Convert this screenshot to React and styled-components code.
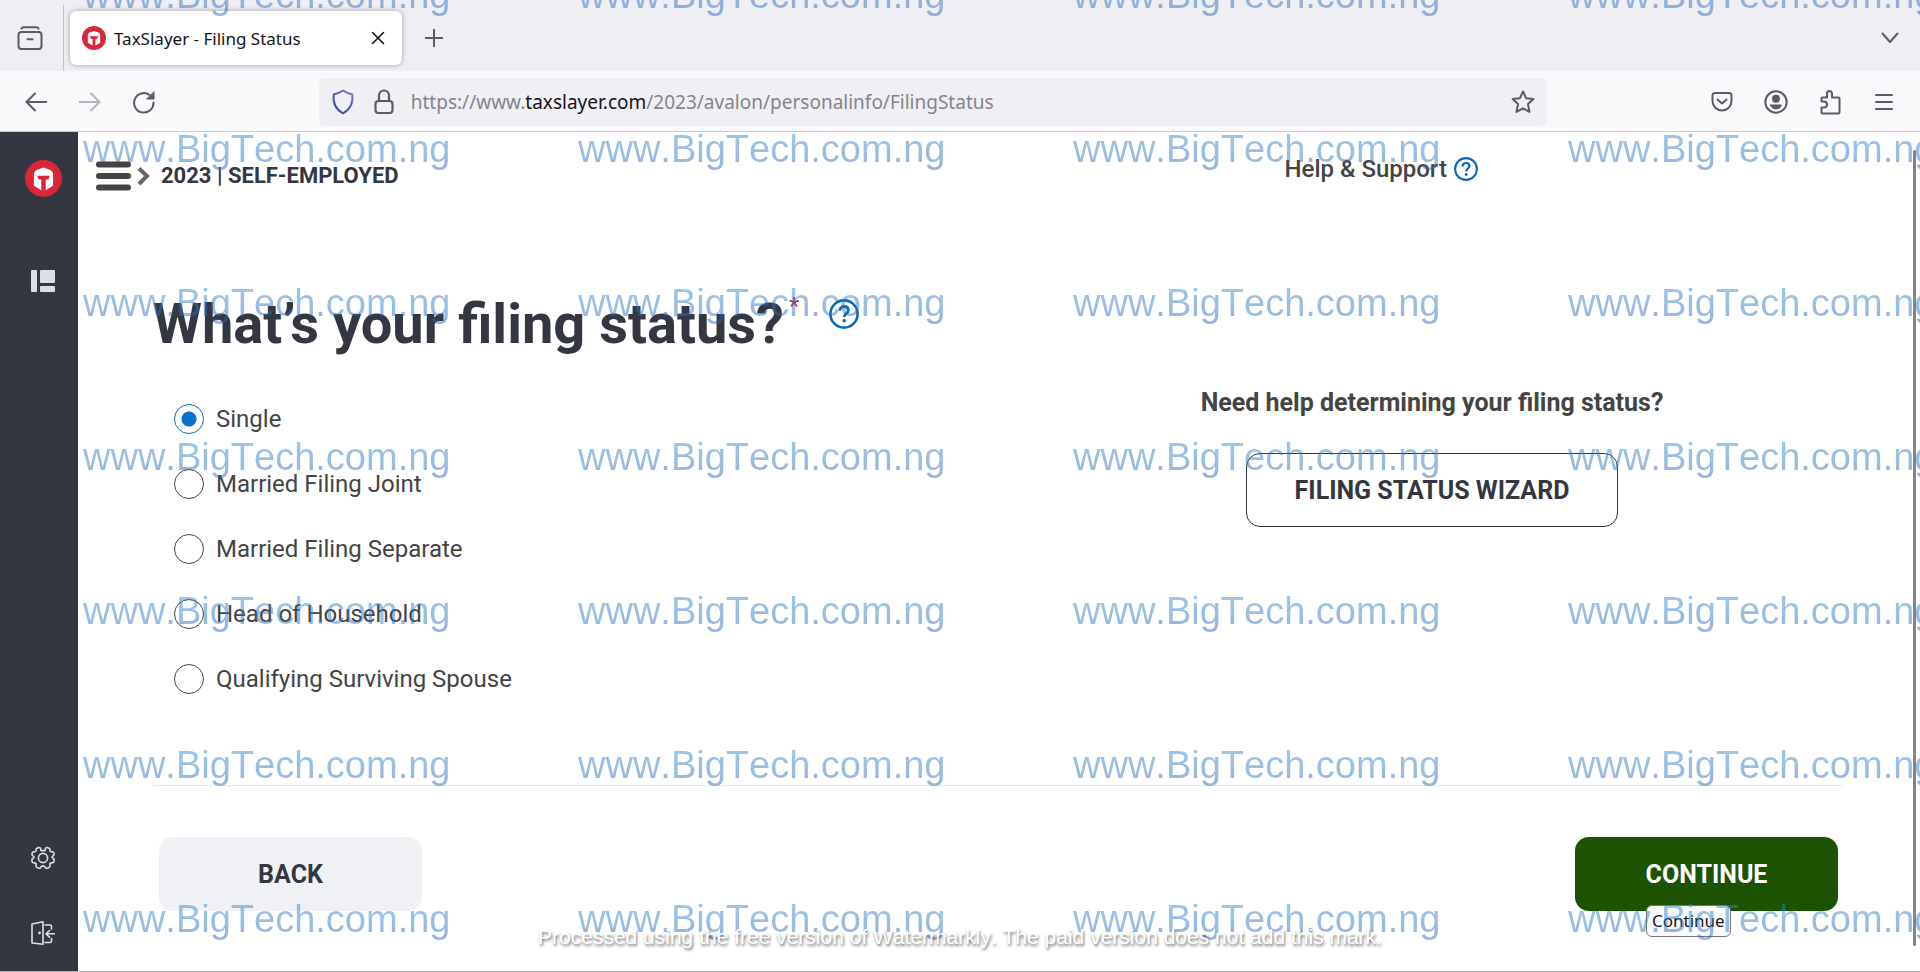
import { useState } from "react";
import styled, { createGlobalStyle } from "styled-components";

const STATUSES = [
    "Single",
    "Married Filing Joint",
    "Married Filing Separate",
    "Head of Household",
    "Qualifying Surviving Spouse",
];

const stamps = Array.from({ length: 28 }, (_, i) => i);

function Logo({ size }) {
    return (
        <svg width={size} height={size} viewBox="0 0 38 38" aria-hidden="true">
            <circle cx="19" cy="19" r="19" fill="#d92638" />
            <path d="M19 7.8l7 2.4q2.8 1.500 2.800 4V26.500L21.300 31V20h2.700l1.500-3.700h-13L14 20h2.700v11l-7.500-4.500V14.200q0-2.500 2.800-4z" fill="#fff" />
        </svg>
    );
}

function HelpIcon({ size }) {
    return (
        <svg width={size} height={size} viewBox="0 0 30 30" fill="none" stroke="#0b69b7" aria-hidden="true">
            <circle cx="15" cy="15" r="13.6" strokeWidth="2.6" />
            <path d="M10.8 11.800c0-2.600 1.900-4.300 4.300-4.300s4.200 1.500 4.200 3.900c0 3.100-4.100 3-4.100 6.600" strokeWidth="2.8" />
            <circle cx="15.2" cy="21.8" r="1.8" fill="#0b69b7" stroke="none" />
        </svg>
    );
}

function Browser() {
    return (
        <header>
            <TabStrip>
                <ViewButton aria-label="Recent browsing">
                    <Icon width="26" height="26" viewBox="0 0 26 26">
                        <path d="M4.5 2.500C5 1.500 5.500 1.200 6.500 1.200h13c1 0 1.500.3 2 1.300" />
                        <rect x="1.5" y="6" width="23" height="17" rx="3" />
                        <path d="M10.5 13.200h5" />
                    </Icon>
                </ViewButton>
                <Tab>
                    <Logo size={24} />
                    <TabTitle>TaxSlayer - Filing Status</TabTitle>
                    <CloseButton aria-label="Close tab">
                        <Icon width="14" height="14" viewBox="0 0 14 14" $color="#15141a" $line={1.6}>
                            <path d="M1.5 1.500l11 11M12.500 1.500l-11 11" />
                        </Icon>
                    </CloseButton>
                </Tab>
                <ToolButton aria-label="New tab">
                    <Icon width="18" height="18" viewBox="0 0 18 18">
                        <path d="M9 .5v17M.5 9h17" />
                    </Icon>
                </ToolButton>
                <Spring />
                <ToolButton aria-label="List all tabs">
                    <Icon width="20" height="12" viewBox="0 0 20 12">
                        <path d="M2.5 1.500l7.500 8.500 7.500-8.500" />
                    </Icon>
                </ToolButton>
            </TabStrip>
            <Toolbar>
                <ToolButton aria-label="Back">
                    <Icon width="22" height="20" viewBox="0 0 22 20">
                        <path d="M10 1.500L1.500 10l8.500 8.500M1.500 10h20" />
                    </Icon>
                </ToolButton>
                <ToolButton aria-label="Forward">
                    <Icon width="22" height="20" viewBox="0 0 22 20" $color="#b5b4ba">
                        <path d="M12 1.500l8.500 8.500-8.500 8.500M20.500 10h-20" />
                    </Icon>
                </ToolButton>
                <ToolButton aria-label="Reload">
                    <Icon width="24" height="24" viewBox="0 0 24 24">
                        <path d="M21.5 12.500A9.700 9.700 0 1 1 17.500 5" />
                        <path d="M22 2v7h-7z" fill="#5b5b66" strokeWidth="1" />
                    </Icon>
                </ToolButton>
                <Spring />
                <UrlBar>
                    <svg width="28" height="26" viewBox="0 0 24 26" fill="none" aria-hidden="true">
                        <defs>
                            <linearGradient id="shield" x1="1" y1="0" x2="0" y2="1">
                                <stop offset="0" stopColor="#a35cd6" />
                                <stop offset="0.6" stopColor="#4a54c4" />
                                <stop offset="1" stopColor="#2b4ba8" />
                            </linearGradient>
                        </defs>
                        <path d="M12 1.500c3 2 6 3.200 9.300 4 .8 7-1.300 14.500-9.300 18.800C4 20 1.900 12.500 2.700 5.500 6 4.700 9 3.500 12 1.500z" stroke="url(#shield)" strokeWidth="1.9" strokeLinejoin="round" />
                    </svg>
                    <Icon width="20" height="26" viewBox="0 0 20 26" $line={2.2}>
                        <rect x="1.5" y="12" width="17" height="12" rx="3" />
                        <path d="M5 12V6.500a5 5 0 0 1 10 0V12" />
                    </Icon>
                    <Url>https://www.<b>taxslayer.com</b>/2023/avalon/personalinfo/FilingStatus</Url>
                    <BookmarkButton aria-label="Bookmark this page">
                        <Icon width="24" height="24" viewBox="0 0 24 24">
                            <path d="M12 1.500l3.100 6.700 7.300.9-5.400 5 1.500 7.800L12 18.300 5.500 21.900 7 14.100l-5.400-5 7.300-.9z" />
                        </Icon>
                    </BookmarkButton>
                </UrlBar>
                <Spring />
                <ToolButton aria-label="Save to Pocket">
                    <Icon width="22" height="22" viewBox="0 0 22 22">
                        <path d="M4 2h14a2.500 2.500 0 0 1 2.500 2.500V10a9.500 9.500 0 0 1-19 0V4.500A2.500 2.500 0 0 1 4 2z" />
                        <path d="M6.5 8.500l4.500 4 4.500-4" />
                    </Icon>
                </ToolButton>
                <ToolButton aria-label="Account">
                    <Icon width="24" height="24" viewBox="0 0 24 24">
                        <circle cx="12" cy="12" r="10.7" />
                        <circle cx="12" cy="8.8" r="3" fill="#5b5b66" />
                        <path d="M6.5 15h11c-.8 2.800-3 4-5.500 4s-4.700-1.200-5.500-4z" fill="#5b5b66" strokeWidth="1" />
                    </Icon>
                </ToolButton>
                <ToolButton aria-label="Extensions">
                    <Icon width="22" height="26" viewBox="0 0 22 26">
                        <path d="M3.5 8.500H8V4.500a2.500 2.500 0 0 1 5 0v4h6.500a1 1 0 0 1 1 1V23a1.500 1.500 0 0 1-1.500 1.500H4A1.500 1.500 0 0 1 2.500 23v-4.500H5a3 3 0 0 0 0-6H2.500v-3a1 1 0 0 1 1-1z" />
                    </Icon>
                </ToolButton>
                <ToolButton aria-label="Menu">
                    <Icon width="18" height="18" viewBox="0 0 18 18">
                        <path d="M1 2h16M1 9h16M1 16h16" />
                    </Icon>
                </ToolButton>
            </Toolbar>
        </header>
    );
}

function SideNav() {
    return (
        <Side>
            <SideLink href="#home" aria-label="TaxSlayer home" $space={72}>
                <Logo size={37} />
            </SideLink>
            <SideLink href="#dashboard" aria-label="Dashboard">
                <svg width="24" height="22" viewBox="0 0 24 22" fill="#dcdfe9" aria-hidden="true">
                    <rect width="6" height="22" rx="1" />
                    <rect x="9" width="15" height="13" rx="1" />
                    <rect x="9" y="16" width="15" height="6" rx="1" />
                </svg>
            </SideLink>
            <Spring />
            <SideLink href="#settings" aria-label="Settings" $space={51}>
                <Icon width="24" height="24" viewBox="0 0 24 24" $color="#dcdfe9" $line={1.6}>
                    <path d="M9.8 4.200C10 2.500 9 1 7.600 1.600L5.600 2.500C4.500 3.200 5.200 4.300 5 5c-.4 1-1.600.6-2.600.7C1.300 6 1 7.500.9 8.500c0 1.200 1.600 1.300 2 2.300.3 1.200-1.700 1.700-2 2.800-.1 1.200.4 3 1.600 3.200 1 .1 2.400-.1 2.700.9.3 1-.9 2.200.2 3.300.8.700 2.500 1.500 3.500 1.200C10 21.700 9.800 19.900 12 19.900s2 1.800 3.100 2.300c1 .3 2.700-.5 3.500-1.200 1.100-1.100-.1-2.300.2-3.300.3-1 1.700-.8 2.700-.9 1.200-.2 1.700-2 1.600-3.200-.3-1.100-2.300-1.600-2-2.800.4-1 2-1.100 2-2.300-.1-1-.4-2.500-1.500-2.800-1-.1-2.200.3-2.600-.7-.2-.700.5-1.800-.6-2.500l-2-.9c-1.400-.6-2.400.9-2.200 2.600-1.200.5-3.200.5-4.400 0z" />
                    <circle cx="12" cy="12" r="4.6" />
                </Icon>
            </SideLink>
            <SideLink href="#logout" aria-label="Log out">
                <Icon width="24" height="24" viewBox="0 0 24 24" $color="#dcdfe9" $line={1.6}>
                    <path d="M1 3l11-2.200v22.400L1 22z" />
                    <path d="M14 4h5a1.500 1.500 0 0 1 1.500 1.500V8M14 21.500h5a1.500 1.500 0 0 0 1.500-1.500v-2.500" />
                    <path d="M23.5 12.800H15M18.500 9.500L15 12.800l3.500 3.300" />
                    <circle cx="8.5" cy="12" r=".6" />
                </Icon>
            </SideLink>
        </Side>
    );
}

export default function App() {
    const [status, setStatus] = useState("Single");

    return (
        <Page>
            <GlobalStyle />
            <Browser />
            <Body>
                <SideNav />
                <Main>
                    <TopBar>
                        <MenuButton aria-label="Open menu">
                            <svg width="54" height="30" viewBox="0 0 54 30" fill="none" stroke="#444" aria-hidden="true">
                                <path d="M3 3.500h29M3 15h29M3 26.500h29" strokeWidth="6" strokeLinecap="round" />
                                <path d="M43 7.500l8 7.500-8 8" stroke="#666" strokeWidth="4" />
                            </svg>
                        </MenuButton>
                        <Crumb>2023 | SELF-EMPLOYED</Crumb>
                        <Support href="#support">
                            Help &amp; Support
                            <HelpIcon size={24} />
                        </Support>
                    </TopBar>
                    <Content>
                        <Columns>
                            <div>
                                <Heading id="question">
                                    What’s your filing status?
                                    <Required>*</Required>
                                    <InfoButton aria-label="About filing status">
                                        <HelpIcon size={30} />
                                    </InfoButton>
                                </Heading>
                                <Options role="radiogroup" aria-labelledby="question">
                                    {STATUSES.map((name) => (
                                        <Option key={name}>
                                            <Radio
                                                type="radio"
                                                name="status"
                                                checked={status === name}
                                                onChange={() => setStatus(name)}
                                            />
                                            {name}
                                        </Option>
                                    ))}
                                </Options>
                            </div>
                            <Wizard>
                                <WizardTitle>Need help determining your filing status?</WizardTitle>
                                <Button $width={372} $outlined>FILING STATUS WIZARD</Button>
                            </Wizard>
                        </Columns>
                        <Actions>
                            <Button>BACK</Button>
                            <ContinueBox>
                                <Button $primary>CONTINUE</Button>
                                <Tooltip role="tooltip">Continue</Tooltip>
                            </ContinueBox>
                        </Actions>
                    </Content>
                    <ScrollThumb />
                </Main>
            </Body>
            <Watermark aria-hidden="true">
                {stamps.map((i) => (
                    <Stamp key={i}>www.BigTech.com.ng</Stamp>
                ))}
            </Watermark>
            <Notice>
                Processed using the free version of Watermarkly. The paid version does not add this mark.
            </Notice>
        </Page>
    );
}

const GlobalStyle = createGlobalStyle`
    * {
        box-sizing: border-box;
    }

    body {
        margin: 0;
        background: #fff;
        font-family: Roboto, sans-serif;
        color: #444;
    }

    button {
        font-family: inherit;
        border: none;
        padding: 0;
        background: none;
        cursor: pointer;
    }
`;

const Page = styled.div`
    position: relative;
    display: flex;
    flex-direction: column;
    min-height: 100vh;
    overflow: hidden;
    border-bottom: 1px solid #b0b0b8;
`;

const Icon = styled.svg.attrs({ "aria-hidden": true })`
    fill: none;
    stroke: ${({ $color }) => $color || "#5b5b66"};
    stroke-width: ${({ $line }) => $line || 2};
    stroke-linecap: round;
    stroke-linejoin: round;
    flex: none;
`;

const Spring = styled.div`
    flex: 6;
`;

const TabStrip = styled.div`
    display: flex;
    align-items: center;
    height: 71px;
    padding: 5px 3px 0 0;
    background: #efeef3;
    font-family: "Noto Sans", sans-serif;
`;

const ViewButton = styled.button`
    width: 64px;
    height: 66px;
    padding: 6px 4px 0 0;
    border-right: 1px solid #c4c3ca;
`;

const Tab = styled.div`
    display: flex;
    align-items: center;
    width: 332px;
    height: 54px;
    margin: 0 5px 0 6px;
    padding: 0 12px;
    border-radius: 6px;
    background: #fff;
    box-shadow: 0 0 5px rgba(0, 0, 0, 0.35);
`;

const TabTitle = styled.span`
    flex: 1;
    margin-left: 8px;
    font-size: 17px;
    color: #15141a;
    white-space: nowrap;
`;

const CloseButton = styled.button`
    display: flex;
    align-items: center;
    justify-content: center;
    width: 24px;
    height: 24px;
`;

const ToolButton = styled.button`
    display: flex;
    align-items: center;
    justify-content: center;
    width: 54px;
    height: 48px;
`;

const Toolbar = styled.div`
    display: flex;
    align-items: center;
    height: 61px;
    padding: 2px 9px 0;
    background: #f9f9fb;
    border-bottom: 1px solid #cccccf;
`;

const UrlBar = styled.div`
    display: flex;
    align-items: center;
    gap: 17px;
    flex: 49;
    height: 48px;
    padding: 0 12px 0 10px;
    border-radius: 5px;
    background: #f0eff4;
`;

const Url = styled.span`
    flex: 1;
    font-family: "Noto Sans", sans-serif;
    font-size: 19px;
    color: #85848a;
    white-space: nowrap;

    b {
        font-weight: 400;
        color: #15141a;
    }
`;

const BookmarkButton = styled.button`
    height: 24px;
`;

const Body = styled.div`
    display: flex;
    flex: 1;
`;

const Side = styled.nav`
    display: flex;
    flex-direction: column;
    align-items: center;
    width: 78px;
    padding: 28px 0 26px 8px;
    background: #343741;
`;

const SideLink = styled.a`
    display: flex;
    align-items: center;
    justify-content: center;
    min-height: 24px;
    margin-bottom: ${({ $space }) => $space || 0}px;
`;

const Main = styled.main`
    position: relative;
    flex: 1;
`;

const TopBar = styled.div`
    display: flex;
    align-items: center;
    height: 88px;
    padding: 0 24% 0 18px;
`;

const MenuButton = styled.button`
    height: 30px;
`;

const Crumb = styled.span`
    margin-left: 11px;
    padding-bottom: 2px;
    font-size: 22px;
    font-weight: 700;
    color: #343741;
`;

const Support = styled.a`
    display: flex;
    align-items: center;
    gap: 7px;
    margin-left: auto;
    padding-bottom: 14px;
    font-size: 24px;
    font-weight: 500;
    color: #444;
    text-decoration: none;
`;

const Content = styled.div`
    padding: 72px 77px 60px 75px;
`;

const Columns = styled.div`
    display: grid;
    grid-template-columns: 1fr 1fr;
    gap: 46px;
    padding-bottom: 74px;
    border-bottom: 1px solid #e8e8ec;
`;

const Heading = styled.h1`
    display: flex;
    margin: 0 0 30px;
    font-size: 56px;
    line-height: 64px;
    color: #343741;
    white-space: nowrap;
`;

const Required = styled.sup`
    margin-left: 5px;
    font-size: 24px;
    font-weight: 400;
    line-height: 28px;
    color: #d0263c;
`;

const InfoButton = styled.button`
    height: 30px;
    margin: 7px 0 0 30px;
    line-height: 0;
`;

const Options = styled.div`
    padding-left: 21px;
`;

const Option = styled.label`
    display: flex;
    align-items: center;
    gap: 12px;
    height: 65px;
    font-size: 24px;
`;

const Radio = styled.input`
    appearance: none;
    width: 30px;
    height: 30px;
    margin: 0;
    border: 1px solid #444;
    border-radius: 50%;

    &:checked {
        border-color: #0b69b7;
        background: radial-gradient(circle, #0b6fcf 7px, transparent 8px);
    }
`;

const Wizard = styled.section`
    display: flex;
    flex-direction: column;
    align-items: center;
    padding-top: 95px;
`;

const WizardTitle = styled.h2`
    margin: 0 0 34px;
    font-size: 25px;
    line-height: 32px;
`;

const Button = styled.button`
    width: ${({ $width }) => $width || 263}px;
    height: 74px;
    border: ${({ $outlined }) => ($outlined ? "1px solid #343741" : "none")};
    border-radius: 14px;
    background: ${({ $primary, $outlined }) => ($primary ? "#1c5200" : $outlined ? "none" : "#f0f1f4")};
    color: ${({ $primary }) => ($primary ? "#fff" : "#343741")};
    font-size: 25px;
    font-weight: 700;
`;

const Actions = styled.div`
    display: flex;
    justify-content: space-between;
    padding: 51px 5px 0 6px;
`;

const ContinueBox = styled.div`
    position: relative;
`;

const Tooltip = styled.span`
    position: absolute;
    top: 68px;
    left: 71px;
    padding: 0 5px;
    border: 1px solid #77767c;
    border-radius: 6px;
    background: #f9f9fb;
    font-family: "Noto Sans", sans-serif;
    font-size: 17px;
    line-height: 30px;
    color: #15141a;
`;

const ScrollThumb = styled.div`
    position: absolute;
    top: 18px;
    right: 4px;
    bottom: 25px;
    width: 3px;
    border-radius: 2px;
    background: #858585;
`;

const Watermark = styled.div`
    position: absolute;
    inset: -27px 0 0 83px;
    display: grid;
    grid-template-columns: repeat(4, 495px);
    grid-auto-rows: 154px;
    align-items: start;
    overflow: hidden;
    pointer-events: none;
`;

const Stamp = styled.span`
    background: linear-gradient(rgba(50, 145, 210, 0.48), rgba(40, 95, 185, 0.48));
    background-clip: text;
    color: transparent;
    font-family: "Liberation Sans", sans-serif;
    font-size: 38px;
    font-kerning: none;
    line-height: 44px;
    white-space: nowrap;
`;

const Notice = styled.p`
    position: absolute;
    right: 0;
    bottom: 20px;
    left: 0;
    margin: 0;
    font-family: "Liberation Sans", sans-serif;
    font-size: 21px;
    font-kerning: none;
    line-height: 28px;
    text-align: center;
    color: #fff;
    text-shadow: 1px 2px 3px rgba(0, 0, 0, 0.6);
    pointer-events: none;
`;
